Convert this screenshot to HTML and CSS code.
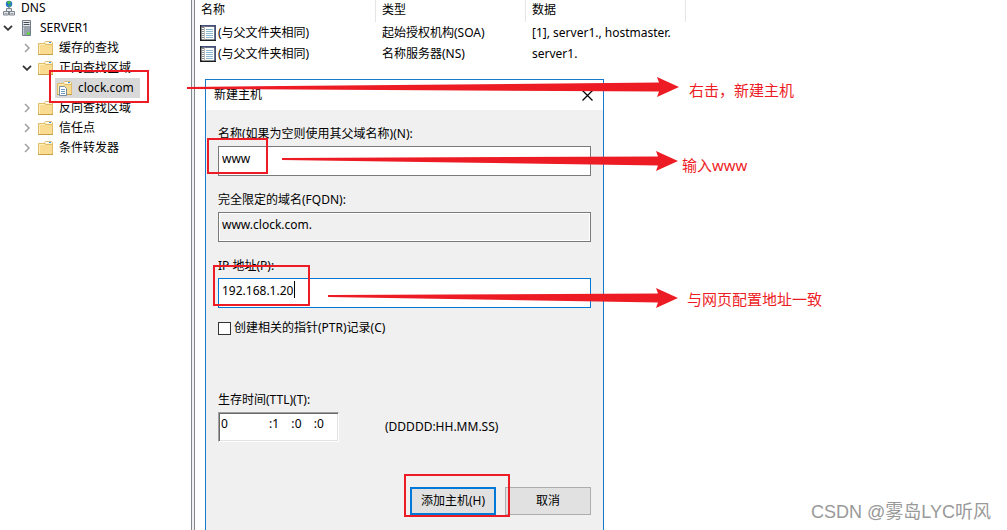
FILE: index.html
```html
<!DOCTYPE html>
<html lang="zh-CN">
<head>
    <meta charset="UTF-8">
    <meta name="viewport" content="width=device-width, initial-scale=1.0">
    <title>DNS 管理器</title>
    <link rel="stylesheet" href="styles.css">
</head>
<body>
    <svg width="0" height="0" class="sprites" aria-hidden="true">
        <symbol id="folder" viewBox="0 0 15 14">
            <path d="M6.500 3V1.500L7.500 .5H13.500L14.500 1.500V4H6.500Z" fill="#fdf3d0" stroke="#dcbc74"/>
            <path d="M8 1.500H11" stroke="#fff"/>
            <path d="M11 1.500H13" stroke="#3a94e4"/>
            <path d="M.5 2.500H6.500L8 3.500H14.500V13.500H.5Z" fill="#f9dc92" stroke="#e0bc68"/>
            <path d="M1.500 3.500H6.500M1.500 4V13" fill="none" stroke="#fdeebc"/>
            <path d="M0 13.500H15" stroke="#c8a048"/>
        </symbol>
        <symbol id="open" viewBox="0 0 10 6">
            <path d="M1 .8L5 4.800L9 .8" fill="none" stroke="#333" stroke-width="1.800"/>
        </symbol>
        <symbol id="closed" viewBox="0 0 6 10">
            <path d="M1 1L5 5L1 9" fill="none" stroke="#a0a0a0" stroke-width="1.500"/>
        </symbol>
        <symbol id="record" viewBox="0 0 16 16">
            <path d="M.75 .75H15.250V15.250H.75Z" fill="#fff" stroke="#1c1c1c" stroke-width="1.500"/>
            <path d="M1 .7H15.300V15" fill="none" stroke="#44507c" stroke-width="1.400"/>
            <path d="M3 2V14" stroke="#888" stroke-width="2" stroke-dasharray="1 1"/>
            <path d="M4.500 1.500V14.500" stroke="#bbb"/>
            <path d="M6 4.500H13M6 6.500H13M6 8.500H13M6 10.500H13M6 12.500H13" stroke="#8cb8d4"/>
        </symbol>
    </svg>

    <div class="app">
        <nav class="tree">
            <ul>
                <li>
                    <div class="node root">
                        <svg class="icon" width="12" height="16" viewBox="0 0 12 16">
                            <circle cx="6" cy="4" r="3.200" fill="#2674c8"/>
                            <path d="M4 2Q6 0 8 2L7 4L5 4ZM5 5L8 5L7 7Z" fill="#46b846"/>
                            <path d="M6 7V9" stroke="#555"/>
                            <path d="M3.500 8.500H8.500V11.500H3.500ZM.5 11.500H5.500V15H.5ZM6.500 11.500H11.500V15H6.500Z" fill="#e4e8ec" stroke="#7c848c"/>
                            <path d="M1.500 13.500H4.500M7.500 13.500H10.500" stroke="#9aa2aa"/>
                        </svg>
                        <span>DNS</span>
                    </div>
                    <ul>
                        <li>
                            <div class="node server">
                                <svg class="arrow" width="10" height="6"><use href="#open"/></svg>
                                <svg class="icon" width="9" height="16" viewBox="0 0 9 16">
                                    <path d="M.5 .5H8.500V15.500H.5Z" fill="#98a2ac" stroke="#737c86"/>
                                    <path d="M1 1.500H8M1 3.500H8M1 5.500H8" stroke="#e8ecf0"/>
                                    <path d="M2 2.500H7M2 4.500H7" stroke="#454d55"/>
                                    <path d="M1.500 7V15" stroke="#c4ccd4"/>
                                    <path d="M5 13.500H8" stroke="#53e028" stroke-width="2"/>
                                </svg>
                                <span>SERVER1</span>
                            </div>
                            <ul>
                                <li>
                                    <div class="node zone">
                                        <svg class="arrow" width="6" height="10"><use href="#closed"/></svg>
                                        <svg class="icon" width="15" height="14"><use href="#folder"/></svg>
                                        <span>缓存的查找</span>
                                    </div>
                                </li>
                                <li>
                                    <div class="node zone">
                                        <svg class="arrow" width="10" height="6"><use href="#open"/></svg>
                                        <svg class="icon" width="15" height="14"><use href="#folder"/></svg>
                                        <span>正向查找区域</span>
                                    </div>
                                    <ul>
                                        <li>
                                            <div class="node selected">
                                                <svg class="icon" width="15" height="15" viewBox="0 0 15 15">
                                                    <use href="#folder" width="15" height="14"/>
                                                    <path d="M2.500 5.500H7.500L9.500 7.500V14.500H2.500Z" fill="#fff" stroke="#7a8ca0"/>
                                                    <path d="M4 8.500H8M4 10.500H8M4 12.500H8" stroke="#6a9cc8"/>
                                                </svg>
                                                <span>clock.com</span>
                                            </div>
                                        </li>
                                    </ul>
                                </li>
                                <li>
                                    <div class="node zone">
                                        <svg class="arrow" width="6" height="10"><use href="#closed"/></svg>
                                        <svg class="icon" width="15" height="14"><use href="#folder"/></svg>
                                        <span>反向查找区域</span>
                                    </div>
                                </li>
                                <li>
                                    <div class="node zone">
                                        <svg class="arrow" width="6" height="10"><use href="#closed"/></svg>
                                        <svg class="icon" width="15" height="14"><use href="#folder"/></svg>
                                        <span>信任点</span>
                                    </div>
                                </li>
                                <li>
                                    <div class="node zone">
                                        <svg class="arrow" width="6" height="10"><use href="#closed"/></svg>
                                        <svg class="icon" width="15" height="14"><use href="#folder"/></svg>
                                        <span>条件转发器</span>
                                    </div>
                                </li>
                            </ul>
                        </li>
                    </ul>
                </li>
            </ul>
        </nav>

        <div class="splitter"></div>

        <main class="content">
            <table class="records">
                <thead>
                    <tr>
                        <th class="col-name">名称</th>
                        <th class="col-type">类型</th>
                        <th class="col-data">数据</th>
                    </tr>
                </thead>
                <tbody>
                    <tr>
                        <td><div class="record-name"><svg width="16" height="16"><use href="#record"/></svg>(与父文件夹相同)</div></td>
                        <td>起始授权机构(SOA)</td>
                        <td>[1], server1., hostmaster.</td>
                    </tr>
                    <tr>
                        <td><div class="record-name"><svg width="16" height="16"><use href="#record"/></svg>(与父文件夹相同)</div></td>
                        <td>名称服务器(NS)</td>
                        <td>server1.</td>
                    </tr>
                </tbody>
            </table>
        </main>

        <section class="dialog" role="dialog" aria-labelledby="dialogTitle">
            <header class="titlebar">
                <span id="dialogTitle">新建主机</span>
                <button type="button" class="close" aria-label="关闭">
                    <svg width="11" height="11" viewBox="0 0 11 11"><path d="M.5 .5L10.500 10.500M10.500 .5L.5 10.500" stroke="#000" stroke-width="1.200"/></svg>
                </button>
            </header>
            <form id="hostForm" onsubmit="return false">
                <div class="field">
                    <label for="hostName">名称(如果为空则使用其父域名称)(N):</label>
                    <input type="text" id="hostName" value="www">
                </div>
                <div class="field">
                    <label for="fqdn">完全限定的域名(FQDN):</label>
                    <input type="text" id="fqdn" value="www.clock.com." readonly>
                </div>
                <div class="field active">
                    <label for="ip">IP 地址(P):</label>
                    <input type="text" id="ip" value="192.168.1.20">
                    <span class="caret"></span>
                </div>
                <div class="check">
                    <input type="checkbox" id="ptr">
                    <label for="ptr">创建相关的指针(PTR)记录(C)</label>
                </div>
                <label for="days">生存时间(TTL)(T):</label>
                <div class="ttl-row">
                    <div class="ttl">
                        <input type="text" id="days" class="days" value="0">
                        <span>:</span><input type="text" aria-label="小时" value="1">
                        <span>:</span><input type="text" aria-label="分钟" value="0">
                        <span>:</span><input type="text" aria-label="秒" value="0">
                    </div>
                    <span>(DDDDD:HH.MM.SS)</span>
                </div>
                <div class="button-group">
                    <button type="submit" class="primary">添加主机(H)</button>
                    <button type="button">取消</button>
                </div>
            </form>
        </section>

        <!-- red boxes, arrows and notes drawn over the window -->
        <svg class="marks" width="700" height="530" viewBox="0 0 700 530" aria-hidden="true">
            <g fill="none" stroke="#ed1c24" stroke-width="2">
                <rect x="50" y="71" width="98" height="31"/>
                <rect x="208" y="139" width="59" height="34"/>
                <rect x="214" y="266" width="95" height="39"/>
                <rect x="405" y="475" width="104" height="41"/>
            </g>
            <g fill="#ed1c24">
                <path d="M187 87L659 82.500L657 77L679 87L657 97L659 91.500L187 89Z"/>
                <path d="M282 158L658 156.500L656 151L678 161L656 171L658 165.500L282 160Z"/>
                <path d="M328 295L658 293.500L656 288L678 298L656 308L658 302.500L328 297Z"/>
            </g>
        </svg>
        <p class="note note-click">右击，新建主机</p>
        <p class="note note-www">输入www</p>
        <p class="note note-ip">与网页配置地址一致</p>
        <p class="watermark">CSDN @雾岛LYC听风</p>
    </div>
</body>
</html>
```
FILE: styles.css
```css
* {
    box-sizing: border-box;
}

body {
    margin: 0;
    background-color: #fff;
    color: #000;
    font-family: "Noto Sans", "Noto Sans CJK SC", sans-serif;
    font-size: 12px;
    line-height: 16px;
}

input, button {
    font: inherit;
    color: inherit;
}

.sprites {
    position: absolute;
}

.app {
    position: relative;
    display: flex;
    height: 100vh;
    overflow: hidden;
}

/* left tree */
.tree {
    width: 191px;
    flex: none;
}

.tree ul {
    list-style: none;
    margin: 0;
    padding: 0;
}

.tree > ul {
    margin-top: -2px;
}

.node {
    display: flex;
    align-items: center;
    height: 20px;
    white-space: nowrap;
}

.root {
    padding-left: 3px;
    gap: 6px;
}

.server {
    padding-left: 3px;
    gap: 9px;
}

.zone {
    padding-left: 22px;
    gap: 6px;
}

.zone .arrow {
    width: 10px;
}

.selected {
    width: 85px;
    margin-left: 55px;
    padding-left: 2px;
    gap: 6px;
    background-color: #d9d9d9;
}

.splitter {
    width: 4px;
    flex: none;
    background-color: #f0f0f0;
    border-left: 1px solid #828790;
    border-right: 1px solid #828790;
}

/* record list */
.content {
    flex: 1;
}

.records {
    border-collapse: separate;
    border-spacing: 0;
    table-layout: fixed;
    width: 491px;
}

.records th {
    height: 22px;
    padding: 0 6px 3px;
    border-right: 1px solid #e5e5e5;
    font-weight: normal;
    text-align: left;
}

.records .col-name {
    width: 181px;
}

.records .col-type {
    width: 150px;
}

.records .col-data {
    width: 160px;
}

.records td {
    height: 21px;
    padding: 0 6px;
    white-space: nowrap;
}

.records td:first-child {
    padding-left: 5px;
}

.record-name {
    display: flex;
    align-items: center;
    gap: 2px;
}

/* new host dialog */
.dialog {
    position: absolute;
    left: 205px;
    top: 79px;
    bottom: -8px;
    width: 399px;
    background-color: #f0f0f0;
    border: 1px solid #1979ca;
}

.titlebar {
    display: flex;
    justify-content: space-between;
    align-items: center;
    height: 30px;
    padding: 0 10px 0 8px;
    background-color: #fff;
}

.close {
    display: flex;
    padding: 0;
    border: none;
    background: none;
}

form {
    padding: 16px 12px;
}

form label {
    display: block;
}

.field {
    position: relative;
    margin-bottom: 16px;
}

.field input {
    display: block;
    width: 100%;
    height: 30px;
    margin-top: 4px;
    padding: 0 3px 6px;
    border: 1px solid #7a7a7a;
    border-radius: 0;
    background-color: #fff;
    outline: none;
}

.field input[readonly] {
    background-color: #f0f0f0;
    box-shadow: inset 0 0 0 1px #fff;
}

.field.active input {
    border-color: #0078d7;
}

.caret {
    position: absolute;
    left: 76px;
    top: 23px;
    width: 1px;
    height: 17px;
    background-color: #000;
}

.check {
    display: flex;
    gap: 3px;
    margin-top: -4px;
    margin-bottom: 56px;
}

.check input {
    appearance: none;
    width: 13px;
    height: 13px;
    margin: 2px 0 0;
    border: 1px solid #333;
    background-color: #fff;
}

.ttl-row {
    display: flex;
    align-items: center;
    gap: 46px;
    margin-top: 4px;
}

.ttl {
    display: flex;
    width: 121px;
    height: 30px;
    padding: 3px 2px;
    border: 1px solid;
    border-color: #a0a0a0 #fff #fff #a0a0a0;
    background-color: #fff;
    box-shadow: inset 1px 1px #696969, inset -1px -1px #e3e3e3;
}

.ttl input {
    width: 19px;
    height: 16px;
    padding: 0;
    border: none;
    background: none;
    outline: none;
}

.ttl .days {
    width: 48px;
}

.ttl span {
    width: 4px;
}

.button-group {
    display: flex;
    justify-content: flex-end;
    gap: 9px;
    margin-top: 45px;
}

.button-group button {
    width: 86px;
    height: 28px;
    padding: 0;
    border: 1px solid #adadad;
    background-color: #e1e1e1;
}

.button-group .primary {
    border: 2px solid #0078d7;
}

/* annotations */
.marks {
    position: absolute;
    left: 0;
    top: 0;
    pointer-events: none;
}

.note {
    position: absolute;
    margin: 0;
    color: #ed1c24;
    font-size: 15px;
    line-height: 20px;
}

.note-click {
    left: 689px;
    top: 80px;
}

.note-www {
    left: 682px;
    top: 155px;
}

.note-ip {
    left: 687px;
    top: 289px;
}

.watermark {
    position: absolute;
    right: 16px;
    bottom: 6px;
    margin: 0;
    color: #999;
    font-family: "Liberation Sans", "Noto Sans CJK SC", sans-serif;
    font-size: 18px;
    line-height: 24px;
}
```
